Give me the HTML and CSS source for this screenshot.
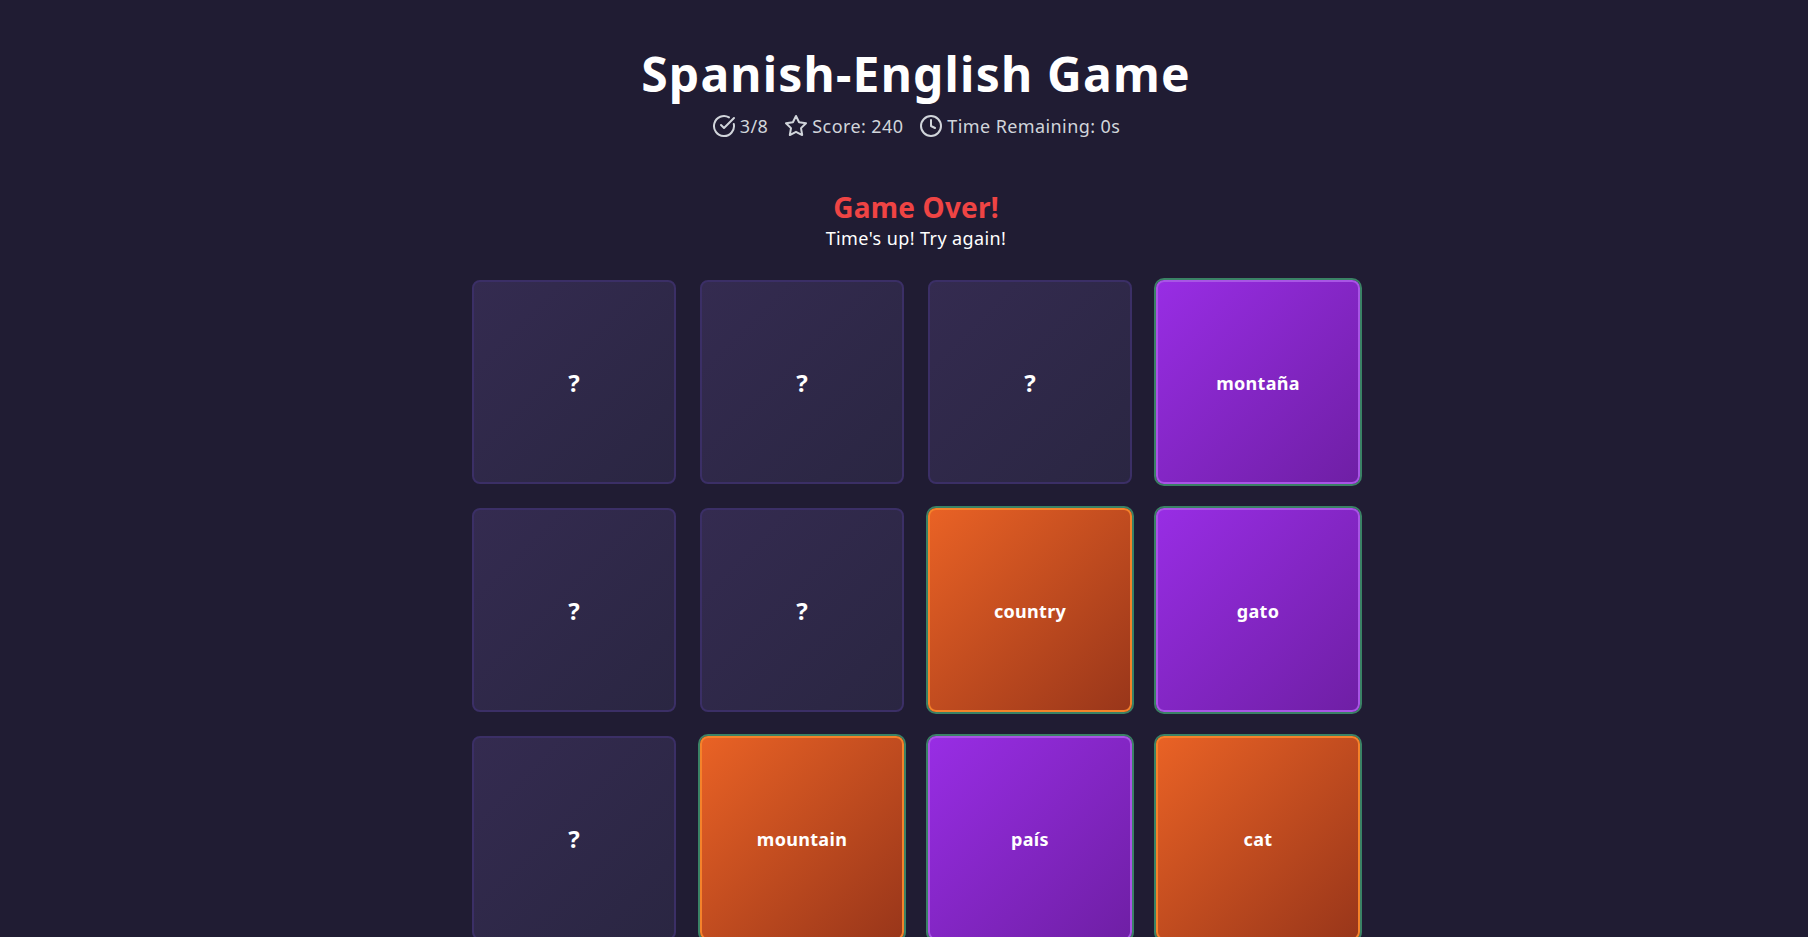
FILE: index.html
```html
<!DOCTYPE html>
<html lang="en">

<head>
  <meta charset="UTF-8">
  <meta name="viewport" content="width=device-width, initial-scale=1.0">
  <title>Spanish-English Game</title>
  <link rel="stylesheet" href="styles.css">
</head>

<body>
  <div class="page">
    <header class="header">
      <h1 class="title">Spanish-English Game</h1>
      <div class="stats">
        <div class="stat">
          <svg class="icon" viewBox="0 0 24 24"><path d="M21.801 10A10 10 0 1 1 17 3.335"/><path d="m9 11 3 3L22 4"/></svg>
          <span>3/8</span>
        </div>
        <div class="stat">
          <svg class="icon" viewBox="0 0 24 24"><path d="M12 2l3.09 6.26L22 9.27l-5 4.87 1.18 6.88L12 17.77l-6.18 3.25L7 14.14 2 9.27l6.91-1.01L12 2z"/></svg>
          <span>Score: 240</span>
        </div>
        <div class="stat">
          <svg class="icon" viewBox="0 0 24 24"><circle cx="12" cy="12" r="10"/><path d="M12 6v6l4 2"/></svg>
          <span>Time Remaining: 0s</span>
        </div>
      </div>
    </header>

    <div class="result">
      <h2 class="result-title">Game Over!</h2>
      <p class="result-text">Time's up! Try again!</p>
    </div>

    <div class="grid">
      <div class="card hidden">?</div>
      <div class="card hidden">?</div>
      <div class="card hidden">?</div>
      <div class="card spanish">montaña</div>
      <div class="card hidden">?</div>
      <div class="card hidden">?</div>
      <div class="card english">country</div>
      <div class="card spanish">gato</div>
      <div class="card hidden">?</div>
      <div class="card english">mountain</div>
      <div class="card spanish">país</div>
      <div class="card english">cat</div>
    </div>
  </div>
</body>

</html>
```

FILE: styles.css
```css
* {
  margin: 0;
  padding: 0;
  box-sizing: border-box;
}

html,
body {
  height: 100%;
  overflow: hidden;
  background: #201c33;
  font-family: "Noto Sans", "Open Sans", sans-serif;
  color: #fff;
}

/* Column is centred a little right of the window, as in the original */
.page {
  display: flex;
  flex-direction: column;
  align-items: center;
  padding: 45px 0 0 24px;
}

.header {
  text-align: center;
  margin-bottom: 49px;
}

.title {
  font-size: 48px;
  line-height: 1.2;
  font-weight: 700;
  letter-spacing: 1.2px;
  margin-bottom: 9px;
}

.stats {
  display: flex;
  justify-content: center;
  gap: 16px;
  font-size: 18px;
  line-height: 28px;
  letter-spacing: 0.4px;
  color: #d1d5db;
}

.stat {
  display: flex;
  align-items: center;
  gap: 4px;
}

.icon {
  width: 24px;
  height: 24px;
  fill: none;
  stroke: currentColor;
  stroke-width: 2;
  stroke-linecap: round;
  stroke-linejoin: round;
}

.result {
  text-align: center;
  margin-bottom: 28px;
}

.result-title {
  font-size: 28px;
  line-height: 36px;
  font-weight: 700;
  letter-spacing: 0.2px;
  color: #ef4444;
}

.result-text {
  font-size: 18px;
  line-height: 27px;
  letter-spacing: 0.4px;
}

.grid {
  display: grid;
  grid-template-columns: repeat(4, 204px);
  grid-auto-rows: 204px;
  gap: 24px;
}

.card {
  display: flex;
  align-items: center;
  justify-content: center;
  padding-top: 2px;
  border-radius: 8px;
  border: 2px solid;
  font-size: 18px;
  font-weight: 700;
  letter-spacing: 0.3px;
}

.hidden {
  background: linear-gradient(135deg, #342b50, #2a2642);
  border-color: #3b2f66;
  font-size: 24px;
}

.spanish {
  background: linear-gradient(135deg, #982de4, #6f1fa5);
  border-color: #a855e5;
  box-shadow: 0 0 0 2px #3a8265;
}

.english {
  background: linear-gradient(135deg, #e96225, #99361a);
  border-color: #f5822a;
  box-shadow: 0 0 0 2px #3a8265;
}
```
